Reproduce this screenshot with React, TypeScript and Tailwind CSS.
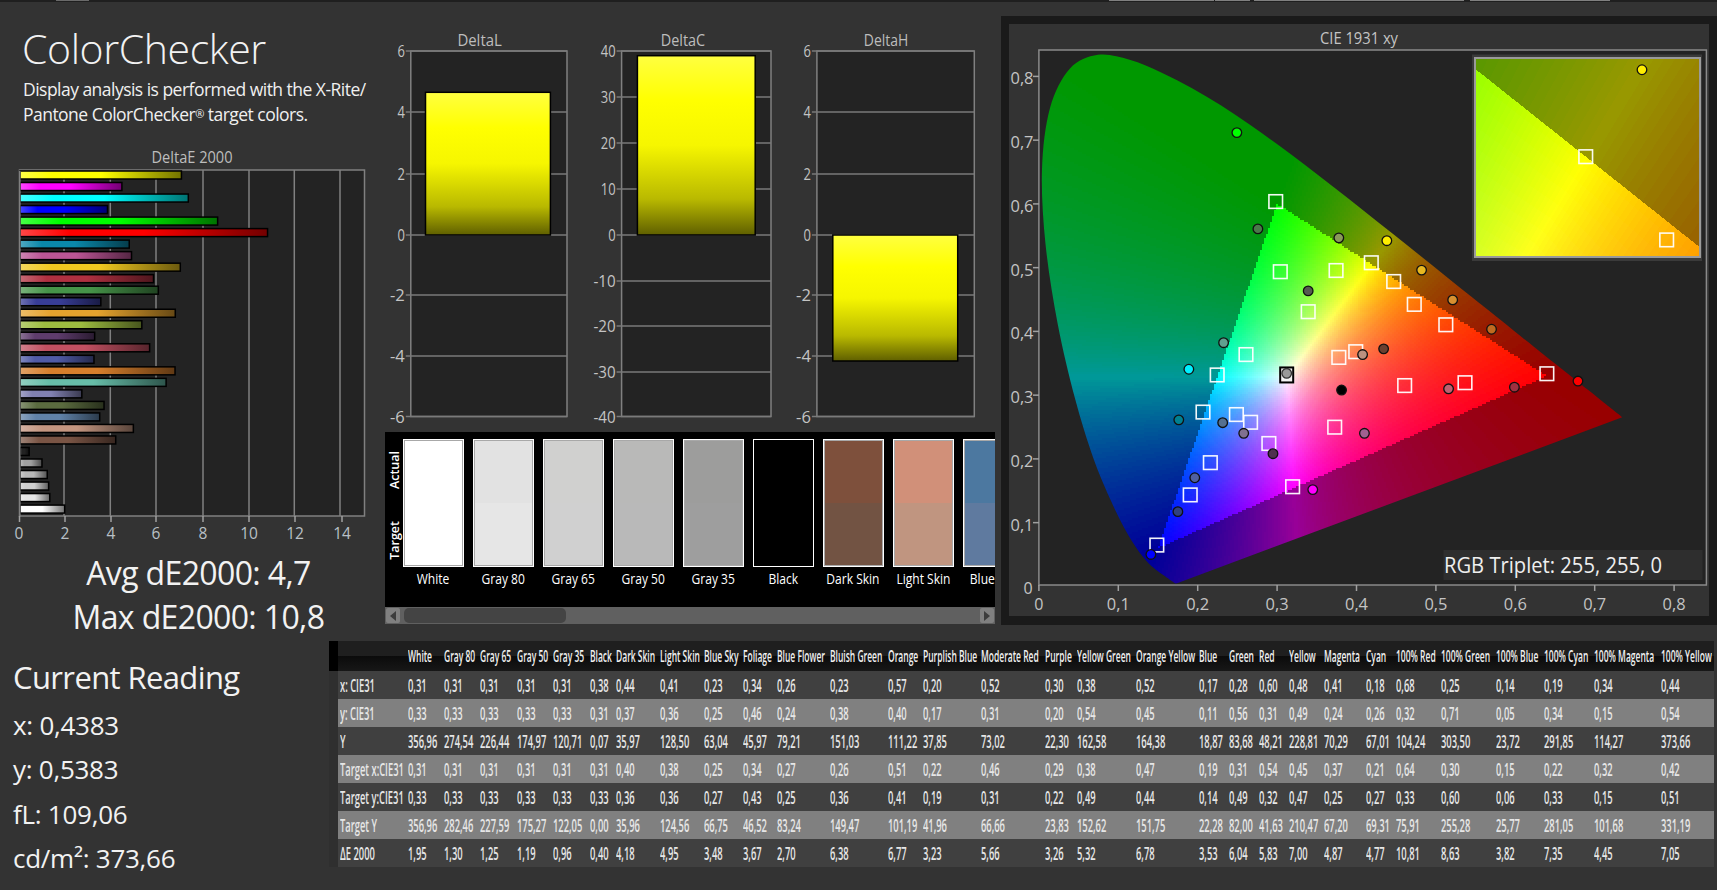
import { useMemo } from "react"

const columns = [
  "White", "Gray 80", "Gray 65", "Gray 50", "Gray 35", "Black", "Dark Skin", "Light Skin", "Blue Sky", "Foliage",
  "Blue Flower", "Bluish Green", "Orange", "Purplish Blue", "Moderate Red", "Purple", "Yellow Green", "Orange Yellow",
  "Blue", "Green", "Red", "Yellow", "Magenta", "Cyan", "100% Red", "100% Green", "100% Blue", "100% Cyan", "100% Magenta", "100% Yellow",
]

const rows = [
  ["x: CIE31", "0,31 0,31 0,31 0,31 0,31 0,38 0,44 0,41 0,23 0,34 0,26 0,23 0,57 0,20 0,52 0,30 0,38 0,52 0,17 0,28 0,60 0,48 0,41 0,18 0,68 0,25 0,14 0,19 0,34 0,44"],
  ["y: CIE31", "0,33 0,33 0,33 0,33 0,33 0,31 0,37 0,36 0,25 0,46 0,24 0,38 0,40 0,17 0,31 0,20 0,54 0,45 0,11 0,56 0,31 0,49 0,24 0,26 0,32 0,71 0,05 0,34 0,15 0,54"],
  ["Y", "356,96 274,54 226,44 174,97 120,71 0,07 35,97 128,50 63,04 45,97 79,21 151,03 111,22 37,85 73,02 22,30 162,58 164,38 18,87 83,68 48,21 228,81 70,29 67,01 104,24 303,50 23,72 291,85 114,27 373,66"],
  ["Target x:CIE31", "0,31 0,31 0,31 0,31 0,31 0,31 0,40 0,38 0,25 0,34 0,27 0,26 0,51 0,22 0,46 0,29 0,38 0,47 0,19 0,31 0,54 0,45 0,37 0,21 0,64 0,30 0,15 0,22 0,32 0,42"],
  ["Target y:CIE31", "0,33 0,33 0,33 0,33 0,33 0,33 0,36 0,36 0,27 0,43 0,25 0,36 0,41 0,19 0,31 0,22 0,49 0,44 0,14 0,49 0,32 0,47 0,25 0,27 0,33 0,60 0,06 0,33 0,15 0,51"],
  ["Target Y", "356,96 282,46 227,59 175,27 122,05 0,00 35,96 124,56 66,75 46,52 83,24 149,47 101,19 41,96 66,66 23,83 152,62 151,75 22,28 82,00 41,63 210,47 67,20 69,31 75,91 255,28 25,77 281,05 101,68 331,19"],
  ["ΔE 2000", "1,95 1,30 1,25 1,19 0,96 0,40 4,18 4,95 3,48 3,67 2,70 6,38 6,77 3,23 5,66 3,26 5,32 6,78 3,53 6,04 5,83 7,00 4,87 4,77 10,81 8,63 3,82 7,35 4,45 7,05"],
]

const tableCols =
  "grid grid-cols-[9px_70px_36px_36px_37px_36px_37px_26px_44px_44px_39px_34px_53px_58px_35px_58px_64px_32px_59px_63px_30px_30px_30px_35px_42px_30px_45px_55px_48px_50px_67px_53px]"

const bars: [number, string][] = [
  [7.05, "#ffff00"], [4.45, "#ff00ff"], [7.35, "#00ffff"], [3.82, "#0000ff"], [8.63, "#00ff00"], [10.81, "#ff0000"],
  [4.77, "#0a88aa"], [4.87, "#bb5595"], [7.0, "#f0c820"], [5.83, "#b03040"], [6.04, "#469449"], [3.53, "#383d96"],
  [6.78, "#e5a32e"], [5.32, "#9dbc40"], [3.26, "#5e3c6c"], [5.66, "#c15061"], [3.23, "#505ba6"], [6.77, "#d67e2c"],
  [6.38, "#67bda8"], [2.7, "#8181b1"], [3.67, "#5a6b3f"], [3.48, "#6082a8"], [4.95, "#c49680"], [4.18, "#7a5545"],
  [0.4, "#222222"], [0.96, "#a0a0a0"], [1.19, "#b8b8b8"], [1.25, "#d0d0d0"], [1.3, "#e6e6e6"], [1.95, "#ffffff"],
]

const swatches = [
  ["White", "#ffffff", "#ffffff"],
  ["Gray 80", "#e2e2e2", "#e6e6e6"],
  ["Gray 65", "#d0d0cf", "#d0d0d0"],
  ["Gray 50", "#b9b9b8", "#b9b9b9"],
  ["Gray 35", "#9d9d9c", "#9e9e9e"],
  ["Black", "#000000", "#000000"],
  ["Dark Skin", "#7e503c", "#725343"],
  ["Light Skin", "#d19079", "#c09580"],
  ["Blue Sky", "#4c78a0", "#5f7a9f"],
]

// spectral locus, xy
const locus = [
  [0.1741, 0.005], [0.1714, 0.0051], [0.1644, 0.0109], [0.1566, 0.0177], [0.144, 0.0297], [0.1355, 0.0399], [0.1241, 0.0578],
  [0.1096, 0.0868], [0.0913, 0.1327], [0.0687, 0.2007], [0.0454, 0.295], [0.0235, 0.4127], [0.0082, 0.5384], [0.0039, 0.6548],
  [0.0139, 0.7502], [0.0389, 0.812], [0.0743, 0.8338], [0.1142, 0.8262], [0.1547, 0.8059], [0.1929, 0.7816], [0.2296, 0.7543],
  [0.2658, 0.7243], [0.3016, 0.6923], [0.3373, 0.6589], [0.3731, 0.6245], [0.4087, 0.5896], [0.4441, 0.5547], [0.4788, 0.5202],
  [0.5125, 0.4866], [0.5448, 0.4544], [0.5752, 0.4242], [0.6029, 0.3965], [0.627, 0.3725], [0.6658, 0.334], [0.6915, 0.3083],
  [0.7079, 0.292], [0.719, 0.2809], [0.7347, 0.2653],
]

const plotX = (x: number) => 1038.9 + x * 794
const plotY = (y: number) => 586.4 - y * 637.5

// positions read off the reference
const zx = (a: number) => 1000 + a / 2.187
const zy = (b: number) => b * 0.408

const dots: [number, number, string][] = [
  [518, 325, "#00ff00"], [564, 561, "#4a7a4a"], [741, 583, "#8a9a5a"], [846, 590, "#ffee00"], [922, 662, "#e8b820"],
  [990, 735, "#d89030"], [1075, 807, "#c06a20"], [674, 713, "#555a50"], [839, 855, "#6a4030"], [793, 869, "#bb9080"],
  [489, 840, "#60a090"], [413, 905, "#00f0ff"], [747, 956, "#000000"], [981, 953, "#c06070"], [1125, 949, "#a03040"],
  [1264, 934, "#ff0000"], [391, 1029, "#008090"], [487, 1036, "#557090"], [533, 1062, "#807090"], [797, 1062, "#a06090"],
  [597, 1112, "#503050"], [426, 1171, "#5060a0"], [684, 1200, "#ff00ff"], [389, 1254, "#304080"], [330, 1359, "#0000ff"],
]

const targets = [
  [603, 494], [613, 666], [735, 663], [812, 644], [861, 690], [906, 746], [975, 796], [674, 764], [538, 869], [778, 862],
  [741, 876], [475, 919], [885, 945], [1017, 938], [1196, 916], [444, 1010], [517, 1016], [548, 1035], [732, 1047], [588, 1087],
  [460, 1134], [416, 1213], [640, 1193], [343, 1336],
]

function mix(hex: string, to: number, t: number) {
  const n = parseInt(hex.slice(1), 16)
  const c = [n >> 16, (n >> 8) & 255, n & 255].map((v) => Math.round(v + (to - v) * t))
  return `rgb(${c[0]},${c[1]},${c[2]})`
}

function chroma(x: number, y: number) {
  const X = x / y
  const Z = (1 - x - y) / y
  const lin = [3.2406 * X - 1.5372 - 0.4986 * Z, -0.9689 * X + 1.8758 + 0.0415 * Z, 0.0557 * X - 0.204 + 1.057 * Z]
  const inGamut = lin.every((c) => c >= 0)
  const clipped = lin.map((c) => Math.max(c, 0))
  const top = Math.max(...clipped, 0.0001)
  const k = inGamut ? 255 : 153
  const q = clipped.map((c) => Math.round(((c / top) * k) / 4) * 4)
  return `rgb(${Math.min(q[0], 255)},${Math.min(q[1], 255)},${Math.min(q[2], 255)})`
}

// one path per colour, so the diagram stays a few thousand nodes
function mesh(x0: number, y0: number, x1: number, y1: number, step: number, toXy: (px: number, py: number) => [number, number]) {
  const groups = new Map<string, string[]>()
  for (let py = y0; py < y1; py += step) {
    for (let px = x0; px < x1; px += step) {
      const [x, y] = toXy(px + step / 2, py + step / 2)
      if (y <= 0.002 || x <= 0) continue
      const c = chroma(x, y)
      const list = groups.get(c)
      const cell = `M${px} ${py}h${step}v${step}h${-step}z`
      if (list) list.push(cell)
      else groups.set(c, [cell])
    }
  }
  return [...groups.entries()].map(([c, cells]) => ({ c, d: cells.join("") }))
}

// catmull-rom through the locus points, straight purple line to close
function locusPath() {
  const p = locus.map(([x, y]) => [plotX(x), plotY(y)])
  let d = `M${p[0][0]} ${p[0][1]}`
  for (let i = 0; i < p.length - 1; i++) {
    const a = p[Math.max(i - 1, 0)]
    const b = p[i]
    const c = p[i + 1]
    const e = p[Math.min(i + 2, p.length - 1)]
    d += `C${b[0] + (c[0] - a[0]) / 6} ${b[1] + (c[1] - a[1]) / 6} ${c[0] - (e[0] - b[0]) / 6} ${c[1] - (e[1] - b[1]) / 6} ${c[0]} ${c[1]}`
  }
  return d + "Z"
}

function Mesh({ cells }: { cells: { c: string; d: string }[] }) {
  return (
    <>
      {cells.map((m) => (
        <path key={m.c} d={m.d} fill={m.c} shapeRendering="crispEdges" />
      ))}
    </>
  )
}

function Target({ cx, cy }: { cx: number; cy: number }) {
  return <rect x={cx - 6.8} y={cy - 6.8} width={13.6} height={13.6} fill="none" stroke="#fff" strokeOpacity="0.95" strokeWidth="1.6" />
}

function DeltaChart(props: {
  title: string
  titleX: number
  x0: number
  width: number
  left: number
  right: number
  ticks: [string, number][]
  barLeft: number
  barRight: number
  barTop: number
  barBottom: number
  id: string
}) {
  const { title, titleX, x0, width, left, right, ticks, barLeft, barRight, barTop, barBottom, id } = props
  return (
    <svg width={width} height={400} viewBox={`${x0} 30 ${width} 400`} className="block shrink-0">
      <defs>
        <linearGradient id={id} x1="0" y1="0" x2="0" y2="1">
          <stop offset="0" stopColor="#ffff40" />
          <stop offset="0.25" stopColor="#ffff00" />
          <stop offset="0.5" stopColor="#f6f600" />
          <stop offset="0.8" stopColor="#b9b900" />
          <stop offset="1" stopColor="#5f5f00" />
        </linearGradient>
      </defs>
      <text x={titleX} y={46} textAnchor="middle" fontSize="16" fill="#bdbdbd" textLength={title.length * 7.4} lengthAdjust="spacingAndGlyphs">
        {title}
      </text>
      <rect x={left} y={51} width={right - left} height={365.5} fill="#232323" stroke="#808080" strokeWidth="1.5" />
      {ticks.map(([label, y]) => (
        <g key={label}>
          <line x1={left - 5} x2={right} y1={y} y2={y} stroke="#7a7a7a" strokeWidth="1.5" />
          <text x={left - 6} y={y + 6} textAnchor="end" fontSize="16" fill="#c4c4c4" textLength={label.length * 7.4} lengthAdjust="spacingAndGlyphs">
            {label}
          </text>
        </g>
      ))}
      <rect x={barLeft} y={barTop} width={barRight - barLeft} height={barBottom - barTop} fill={`url(#${id})`} stroke="#000" strokeWidth="1.5" />
    </svg>
  )
}

function DeltaE() {
  const grid = [64, 110.3, 156, 203, 249, 294.3, 340]
  const labels: [string, number][] = [["0", 19], ["2", 65], ["4", 111], ["6", 156], ["8", 203], ["10", 249], ["12", 295], ["14", 342]]
  return (
    <svg width={385} height={405} viewBox="0 144 385 405" className="block">
      <defs>
        {bars.map(([, color], i) => (
          <linearGradient key={i} id={`bar${i}`} x1="0" y1="0" x2="1" y2="0">
            <stop offset="0" stopColor={mix(color, 255, 0.28)} />
            <stop offset="0.2" stopColor={color} />
            <stop offset="0.5" stopColor={color} />
            <stop offset="1" stopColor={mix(color, 0, 0.55)} />
          </linearGradient>
        ))}
      </defs>
      <text x={192} y={163} textAnchor="middle" fontSize="16" fill="#bdbdbd" textLength={81} lengthAdjust="spacingAndGlyphs">
        DeltaE 2000
      </text>
      <rect x={19.5} y={170} width={345} height={346} fill="#232323" stroke="#808080" strokeWidth="1.5" />
      {grid.map((x) => (
        <line key={x} x1={x} x2={x} y1={170} y2={516} stroke="#808080" strokeWidth="1.5" />
      ))}
      {bars.map(([v], i) => {
        const y = 171 + i * 11.52
        const w = v * 22.9
        return <rect key={i} x={20} y={y} width={w} height={8} fill={`url(#bar${i})`} stroke="#000" strokeWidth="1.5" />
      })}
      <rect x={19} y={171} width={1.5} height={345} fill="#808080" />
      {labels.map(([label, x]) => (
        <g key={label}>
          <line x1={x === 19 ? 19.5 : x} x2={x === 19 ? 19.5 : x} y1={516} y2={522} stroke="#a0a0a0" strokeWidth="1.5" />
          <text x={x} y={539} textAnchor="middle" fontSize="15.5" fill="#b9c0c6">
            {label}
          </text>
        </g>
      ))}
    </svg>
  )
}

function Swatches() {
  return (
    <div className="mt-[2px] flex h-[192px] w-[610px] flex-col bg-black">
      <div className="flex h-[175px] overflow-hidden pt-[7px]">
        <div className="relative w-[18px] shrink-0 text-[12.5px] font-semibold text-white">
          <span className="absolute left-[1px] top-[12px] [writing-mode:vertical-rl] rotate-180">Actual</span>
          <span className="absolute left-[1px] top-[82px] [writing-mode:vertical-rl] rotate-180">Target</span>
        </div>
        <div className="flex gap-[9.5px]">
          {swatches.map(([name, actual, target]) => (
            <div key={name} className="flex w-[60.5px] shrink-0 flex-col items-center">
              <div className="h-[128px] w-full border border-white">
                <div className={`flex h-full flex-col border ${name === "Black" ? "border-black" : "border-[#a8a8a8]"}`}>
                  <div className="h-[62px]" style={{ background: actual }} />
                  <div className="flex-1" style={{ background: target }} />
                </div>
              </div>
              <div className="mt-[3px] origin-center scale-x-[.86] whitespace-nowrap text-[14px] font-medium leading-[18px] text-white">{name}</div>
            </div>
          ))}
        </div>
      </div>
      <div className="flex h-[17px] items-center bg-[#606060] px-[1px]">
        <div className="flex h-[15px] w-[14px] items-center justify-center rounded-[2px] bg-[#808080]">
          <svg width="6" height="10" viewBox="0 0 6 10">
            <polygon points="6,0 6,10 0,5" fill="#3c3c3c" />
          </svg>
        </div>
        <div className="ml-[4px] h-[15px] w-[162px] rounded-[5px] bg-[#444444]" />
        <div className="ml-auto flex h-[15px] w-[14px] items-center justify-center rounded-[2px] bg-[#808080]">
          <svg width="6" height="10" viewBox="0 0 6 10">
            <polygon points="0,0 0,10 6,5" fill="#3c3c3c" />
          </svg>
        </div>
      </div>
    </div>
  )
}

function Cie() {
  const main = useMemo(() => mesh(1040, 50, 1636, 586, 2, (px, py) => [(px - 1038.9) / 794, (586.4 - py) / 637.5]), [])
  const inset = useMemo(() => mesh(1474, 58, 1700, 258, 1, (px, py) => [0.419 + (px - 1585.7) / 3070, 0.5055 + (156.7 - py) / 3070]), [])
  const outline = useMemo(locusPath, [])
  const xTicks = [0, 0.1, 0.2, 0.3, 0.4, 0.5, 0.6, 0.7, 0.8]
  const yTicks = [0.1, 0.2, 0.3, 0.4, 0.5, 0.6, 0.7, 0.8]
  const label = (v: number) => (v === 0 ? "0" : v.toFixed(1).replace(".", ","))
  return (
    <svg width={700} height={592} viewBox="1009 24 700 592" className="block">
      <defs>
        <clipPath id="horseshoe">
          <path d={outline} />
        </clipPath>
      </defs>
      <text x={1359} y={44} textAnchor="middle" fontSize="16" fill="#c4c4c4" textLength={78} lengthAdjust="spacingAndGlyphs">
        CIE 1931 xy
      </text>
      <rect x={1038.9} y={50} width={667.5} height={535} fill="#232323" stroke="#8a8a8a" strokeWidth="1.5" />
      <g clipPath="url(#horseshoe)">
        <Mesh cells={main} />
      </g>
      {yTicks.map((v) => (
        <g key={v}>
          <line x1={1033} x2={1039} y1={plotY(v)} y2={plotY(v)} stroke="#a0a0a0" strokeWidth="1.5" />
          <text x={1022} y={plotY(v) + 8} textAnchor="middle" fontSize="16" fill="#c4c4c4" textLength={23} lengthAdjust="spacingAndGlyphs">
            {label(v)}
          </text>
        </g>
      ))}
      <text x={1028} y={594} textAnchor="middle" fontSize="16" fill="#c4c4c4">
        0
      </text>
      {xTicks.map((v) => (
        <g key={v}>
          <line x1={plotX(v)} x2={plotX(v)} y1={585} y2={591} stroke="#a0a0a0" strokeWidth="1.5" />
          <text x={plotX(v)} y={610} textAnchor="middle" fontSize="16" fill="#c4c4c4" textLength={v === 0 ? undefined : 23} lengthAdjust="spacingAndGlyphs">
            {label(v)}
          </text>
        </g>
      ))}
      {targets.map(([a, b]) => (
        <Target key={`${a}-${b}`} cx={zx(a)} cy={zy(b)} />
      ))}
      <rect x={zx(627) - 6.5} y={zy(919) - 7.5} width={13} height={15} fill="#f4f4f4" stroke="#000" strokeWidth="2" />
      <circle cx={zx(627)} cy={zy(915)} r={4.8} fill="#999999" stroke="#333" strokeWidth="1.3" />
      {dots.map(([a, b, c]) => (
        <circle key={`${a}-${b}`} cx={zx(a)} cy={zy(b)} r={4.8} fill={c} stroke="#111" strokeWidth="1.3" />
      ))}

      <rect x={1472} y={54.5} width={230} height={206.5} fill="#3a3a3a" />
      <Mesh cells={inset} />
      <rect x={1475} y={58} width={225} height={199} fill="none" stroke="#9a9a9a" strokeWidth="2" />
      <Target cx={zx(1281)} cy={zy(384)} />
      <Target cx={zx(1458)} cy={zy(588)} />
      <circle cx={zx(1404)} cy={zy(171)} r={4.8} fill="#ffee00" stroke="#111" strokeWidth="1.3" />

      <rect x={1443.5} y={550} width={259} height={30} fill="#2e2e2e" />
      <text x={1444} y={573} fontSize="21" fill="#efefef" textLength={218} lengthAdjust="spacingAndGlyphs">
        RGB Triplet: 255, 255, 0
      </text>
    </svg>
  )
}

function Table() {
  return (
    <div className="w-[1385px] shrink-0">
      <div className={`${tableCols} h-[30px] items-center bg-[linear-gradient(#1f1f1f_50%,#0b0b0b_50%,#171717)]`}>
        <div className="h-full bg-black" />
        <div />
        {columns.map((c) => (
          <div key={c} className="min-w-0">
            <span className="inline-block origin-left scale-x-[.53] whitespace-nowrap text-[16px] font-semibold leading-[30px] text-[#f0f0f0]">{c}</span>
          </div>
        ))}
      </div>
      {rows.map(([name, values], i) => (
        <div key={name} className={`${tableCols} h-[28px] items-center ${i % 2 === 0 ? "bg-[#404040]" : "bg-[#808080]"}`}>
          <div className="h-full bg-[#2f2f2f]" />
          <div className="min-w-0 pl-[2px]">
            <span className="inline-block origin-left scale-x-[.52] whitespace-nowrap text-[18px] font-semibold leading-[28px] text-[#e6e6e6]">{name}</span>
          </div>
          {values.split(" ").map((v, j) => (
            <div key={j} className="min-w-0">
              <span className="inline-block origin-left scale-x-[.52] whitespace-nowrap text-[18px] font-semibold leading-[28px] text-[#e6e6e6]">{v}</span>
            </div>
          ))}
        </div>
      ))}
    </div>
  )
}

export default function App() {
  return (
    <div className="flex h-[890px] w-[1717px] flex-col overflow-hidden bg-[#333333] font-['Open_Sans',sans-serif] text-[#f2f2f2]">
      <div className="flex h-[2px] shrink-0 bg-[#1f1f1f]">
        <div className="ml-[56px] h-[1px] w-[33px] bg-[#6a6a6a]" />
        <div className="ml-[1020px] h-[1px] w-[105px] bg-[#808080]" />
        <div className="ml-[1px] h-[1px] w-[35px] bg-[#808080]" />
        <div className="ml-[4px] h-[1px] w-[210px] bg-[#808080]" />
        <div className="ml-[6px] h-[1px] w-[140px] bg-[#808080]" />
      </div>

      <div className="flex h-[639px] shrink-0">
        <div className="w-[385px] shrink-0">
          <h1 className="mt-[21px] pl-[22px] text-[41px] font-light leading-[50px] tracking-[-0.01em]">ColorChecker</h1>
          <p className="mt-[4px] pl-[23px] text-[17.5px] leading-[25px] tracking-[-0.03em] text-[#f0f0f0]">
            Display analysis is performed with the X-Rite/
            <br />
            Pantone ColorChecker<span className="align-[3px] text-[11px] leading-none">®</span> target colors.
          </p>
          <div className="mt-[17px]">
            <DeltaE />
          </div>
          <div className="ml-[12px] mt-[2px] text-center text-[32px] leading-[44px] tracking-[-0.02em]">
            <div>Avg dE2000: 4,7</div>
            <div>Max dE2000: 10,8</div>
          </div>
        </div>

        <div className="w-[616px] shrink-0 pt-[28px]">
          <div className="flex">
            <DeltaChart
              id="dl"
              title="DeltaL"
              titleX={479.6}
              x0={385}
              width={205}
              left={410.8}
              right={567}
              ticks={[["6", 51], ["4", 112], ["2", 174], ["0", 235], ["-2", 295], ["-4", 356], ["-6", 416.5]]}
              barLeft={425.5}
              barRight={550.4}
              barTop={92.3}
              barBottom={235}
            />
            <DeltaChart
              id="dc"
              title="DeltaC"
              titleX={683}
              x0={590}
              width={205}
              left={621.6}
              right={771}
              ticks={[["40", 51], ["30", 97], ["20", 143], ["10", 189], ["0", 235], ["-10", 281], ["-20", 326], ["-30", 372], ["-40", 416.5]]}
              barLeft={637.4}
              barRight={755.2}
              barTop={55.7}
              barBottom={235}
            />
            <DeltaChart
              id="dh"
              title="DeltaH"
              titleX={886}
              x0={795}
              width={206}
              left={816.9}
              right={974.3}
              ticks={[["6", 51], ["4", 112], ["2", 174], ["0", 235], ["-2", 295], ["-4", 356], ["-6", 416.5]]}
              barLeft={832.8}
              barRight={957.7}
              barTop={235}
              barBottom={361}
            />
          </div>
          <Swatches />
        </div>

        <div className="mt-[14px] h-[609px] w-[716px] bg-[#1a1a1a] p-[8px]">
          <div className="h-[592px] w-[700px] bg-[#333333]">
            <Cie />
          </div>
        </div>
      </div>

      <div className="flex min-h-0 flex-1">
        <div className="w-[329px] shrink-0 pl-[13px] pt-[13px]">
          <div className="text-[31px] leading-[46px] tracking-[-0.02em]">Current Reading</div>
          <div className="mt-[3px] text-[26px] leading-[44.4px] tracking-[-0.01em]">
            <div>x: 0,4383</div>
            <div>y: 0,5383</div>
            <div>fL: 109,06</div>
            <div>cd/m²: 373,66</div>
          </div>
        </div>
        <Table />
      </div>
    </div>
  )
}
